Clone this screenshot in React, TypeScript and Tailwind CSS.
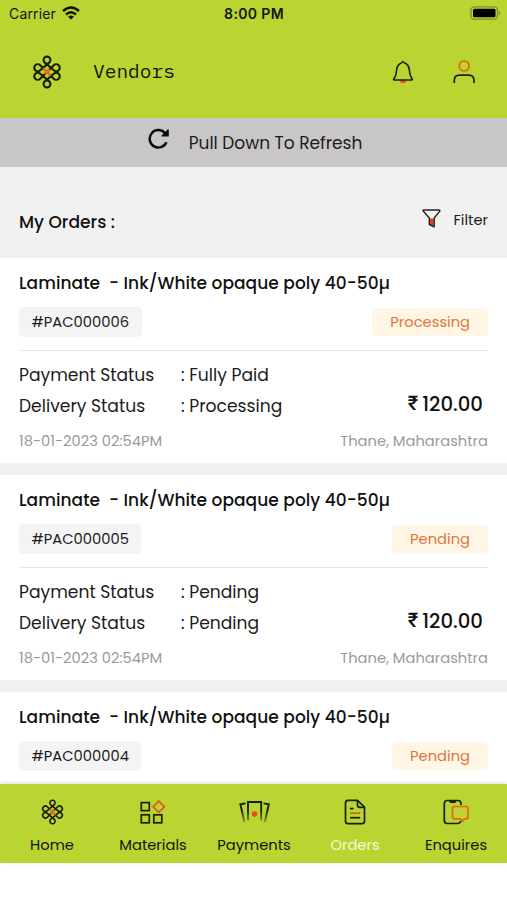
import { FC, ReactNode } from "react"

interface Order {
    id: string
    status: string
    payment?: string
    delivery?: string
}

const orders: Order[] = [
    { id: "#PAC000006", status: "Processing", payment: "Fully Paid", delivery: "Processing" },
    { id: "#PAC000005", status: "Pending", payment: "Pending", delivery: "Pending" },
    { id: "#PAC000004", status: "Pending" },
]

const Knot: FC<{ className: string }> = ({ className }) => (
    <svg className={className} viewBox="0 0 28 34" fill="none" stroke="#17200a" strokeWidth="2.1" strokeLinecap="round">
        <path d="M11.6 7.4 A3.4 3.4 0 1 1 16.4 7.4 L7.2 15.2 A3.5 3.5 0 1 1 7.2 10.2 L20.8 23.8 A3.5 3.5 0 1 0 20.8 18.8 L11.6 26.6 A3.4 3.4 0 1 0 16.4 26.6 L7.2 18.8 A3.5 3.5 0 1 0 7.2 23.8 L20.8 10.2 A3.5 3.5 0 1 1 20.8 15.2z" />
        <path d="M10.8 13.8 L17.2 20.2 M16 15 L12.4 18.6" stroke="#f0701d" />
    </svg>
)

const Bell = () => (
    <svg className="w-[22px] h-6" viewBox="0 0 22 24" fill="none">
        <path d="M7.8 20.3 a3.2 3 0 0 0 6.4 0z" fill="#e8541b" />
        <path d="M11 1.5 C10.4 2.6 9.4 2.9 8 3.7 C5.8 5 4.8 7.2 4.6 10 C4.4 14.5 3.5 16.8 1.7 19 Q1.2 20 2.2 20 H19.8 Q20.8 20 20.3 19 C18.5 16.8 17.6 14.5 17.4 10 C17.2 7.2 16.2 5 14 3.7 C12.6 2.9 11.6 2.6 11 1.5z" stroke="#17200a" strokeWidth="1.5" strokeLinejoin="round" />
    </svg>
)

const User = () => (
    <svg className="w-6 h-6" viewBox="0 0 24 24" fill="none" strokeWidth="1.7">
        <circle cx="12.2" cy="6" r="5" stroke="#e8641b" />
        <path d="M2.3 23 V20.5 Q2.3 15.2 7.6 15.2 H16.6 Q22 15.2 22 20.5 V23" stroke="#17200a" />
    </svg>
)

const Materials = () => (
    <svg className="w-[26px] h-6" viewBox="0 0 26 24" fill="none" stroke="#17200a" strokeWidth="1.7">
        <rect x="1.3" y="2.6" width="8" height="8" />
        <rect x="1.3" y="14.8" width="8" height="8" />
        <rect x="13.8" y="14.8" width="8" height="8" />
        <path d="M18.8 1.2 L24.4 6.8 L18.8 12.4 L13.2 6.8z" stroke="#e8541b" />
    </svg>
)

const Payments = () => (
    <svg className="w-[31px] h-6" viewBox="0 0 31 24" fill="none">
        <defs>
            <linearGradient id="fade" gradientUnits="userSpaceOnUse" x1="0" y1="2" x2="0" y2="23">
                <stop offset="0.4" stopColor="#17200a" />
                <stop offset="1" stopColor="#17200a" stopOpacity="0.25" />
            </linearGradient>
        </defs>
        <g stroke="url(#fade)" strokeWidth="1.9">
            <path d="M9 20.5 V2 H22.2 V20.5" />
            <path d="M6.6 3.4 L1.4 4.3 L5.4 22 M24.6 3.4 L29.8 4.3 L25.8 22" />
        </g>
        <circle cx="15.6" cy="14" r="2.8" fill="#f04a20" />
    </svg>
)

const Orders = () => (
    <svg className="w-[22px] h-[26px]" viewBox="0 0 22 26" fill="none" stroke="#17200a" strokeWidth="1.7" strokeLinejoin="round">
        <path d="M13.5 1.3 H4 Q1.5 1.3 1.5 4 V22 Q1.5 24.7 4 24.7 H18 Q20.5 24.7 20.5 22 V8.2z" />
        <path d="M13.5 1.5 V6 Q13.5 8.3 15.7 8.3 H20.3 M6 9.7 H9.5" />
        <path d="M6 14.2 H16.2" stroke="#c6651a" />
        <path d="M6 18.7 H16.2" />
    </svg>
)

const Enquires = () => (
    <svg className="w-[26px] h-[26px]" viewBox="0 0 26 26" fill="none" strokeWidth="1.7" strokeLinejoin="round">
        <path d="M18 6 V4.5 Q18 1.5 15 1.5 H4.3 Q1.3 1.5 1.3 4.5 V21.5 Q1.3 24.5 4.3 24.5 H14.5 Q17 24.5 18 22" stroke="#17200a" />
        <path d="M5.8 1.5 Q6.2 4 8 4 H11.3 Q13.2 4 13.5 1.5z" fill="#17200a" />
        <path d="M11.5 7.5 H23 Q25 7.5 25 9.5 V17.8 Q25 19.8 23 19.8 H21.5 L19.5 22.2 L17.3 19.8 H11.5 Q9.5 19.8 9.5 17.8 V9.5 Q9.5 7.5 11.5 7.5z" stroke="#e8641b" />
    </svg>
)

const StatusBar = () => (
    <div className="grid grid-cols-3 items-center h-7 pl-[9px] pr-[6px] text-[14px] font-['Inter',sans-serif]">
        <div className="flex items-center gap-[6px]">
            <span className="w-[47px] -mt-px tracking-[0.15px]">Carrier</span>
            <svg className="w-[18px] h-[14px] -mt-[3px]" viewBox="0 0 18 14" fill="none" stroke="#0b1002" strokeWidth="2.4">
                <path d="M1 5 Q9 -1.9 17 5" />
                <path d="M4 8.5 Q9 4.1 14 8.5" />
                <path d="M9 13.6 L6.1 10.7 Q9 8.5 11.9 10.7z" fill="#0b1002" stroke="none" />
            </svg>
        </div>
        <div className="text-center font-semibold tracking-[0.35px] -ml-[2px] -mt-[2px]">8:00 PM</div>
        <svg className="w-[31px] h-[14px] -mt-[2px] justify-self-end" viewBox="0 0 31 14">
            <rect x="1" y="0.8" width="26.5" height="12.4" rx="3.5" fill="none" stroke="#7c8d2d" strokeWidth="1.3" />
            <rect x="3" y="2.8" width="22.5" height="8.4" rx="1.5" fill="#000" />
            <path d="M28.8 4.8 Q31.5 7 28.8 9.2z" fill="#7c8d2d" />
        </svg>
    </div>
)

const OrderCard: FC<{ order: Order }> = ({ order }) => (
    <div className="bg-white h-[205px] shrink-0 px-[19px] pt-[13px]">
        <div className="h-6 leading-6 text-[17px] font-medium tracking-[0.06px] whitespace-pre text-[#111]">
            {"Laminate  - Ink/White opaque poly 40-50µ"}
        </div>
        <div className="flex justify-between items-center mt-3 h-[30px] text-[14.7px]">
            <div className="flex items-center h-[30px] px-[12.5px] rounded bg-[#f4f4f4]">{order.id}</div>
            <div className="flex items-center h-7 px-[18px] rounded bg-[#fff6e6] text-[#df7538]">{order.status}</div>
        </div>
        <div className="mt-[13px] border-t border-[#e5e5e5]" />
        {order.payment && (
            <>
                <div className="pt-[9px] flex justify-between">
                    <div className="grid grid-cols-[162px_auto] auto-rows-[31px] items-center text-[17.15px] whitespace-nowrap">
                        <span>Payment Status</span>
                        <span>: {order.payment}</span>
                        <span>Delivery Status</span>
                        <span>: {order.delivery}</span>
                    </div>
                    <div className="flex items-center gap-1 self-end h-[34px] mr-[5px] font-medium text-[19.7px] text-[#111]">
                        <span className="text-[20px] -mt-1 font-['Roboto',sans-serif]">₹</span>
                        <span>120.00</span>
                    </div>
                </div>
                <div className="flex justify-between mt-2 leading-[22px] text-[14.7px] text-[#9a9a9a]">
                    <span>18-01-2023 02:54PM</span>
                    <span>Thane, Maharashtra</span>
                </div>
            </>
        )}
    </div>
)

const Tab: FC<{ label: string; active?: boolean; children: ReactNode }> = ({ label, active, children }) => (
    <div className="flex flex-col items-center w-[101px] text-[14.7px]">
        <div className="flex items-center justify-center h-7 mt-[14px]">{children}</div>
        <span className={active ? "mt-[9px] leading-5 text-[#f4f9d8]" : "mt-[9px] leading-5"}>{label}</span>
    </div>
)

const App = () => {
    return (
        <div className="w-[507px] h-[900px] flex flex-col overflow-hidden bg-white text-[#1c1c1c] font-['Poppins','Inter',sans-serif]">
            <header className="h-[118px] shrink-0 bg-[#bad432] text-[#10160a]">
                <StatusBar />
                <div className="flex items-center h-[88px] pl-[33px] pr-[31px]">
                    <Knot className="w-7 h-[34px]" />
                    <span className="ml-8 -mt-[2px] font-['IBM_Plex_Mono','Liberation_Mono',monospace] text-[19.5px]">Vendors</span>
                    <div className="ml-auto flex items-center gap-[38px]">
                        <Bell />
                        <User />
                    </div>
                </div>
            </header>

            <div className="h-[49px] shrink-0 flex items-center justify-center pl-[3px] gap-[19px] bg-[#c8c6c7] text-[17px]">
                <svg className="w-[22px] h-[22px] -mt-[7px]" viewBox="0 0 22 22" fill="none" stroke="#0c0c0c" strokeWidth="2.5">
                    <path d="M17.2 5.4 A8.7 8.7 0 1 0 18.4 14.2" />
                    <path d="M20.8 1.6 V8.6 H13.6 V7.4 L19.6 1.6z" fill="#0c0c0c" stroke="none" />
                </svg>
                <span className="mt-[2px]">Pull Down To Refresh</span>
            </div>

            <div className="h-[91px] shrink-0 flex items-center justify-between px-[19px] pt-5 bg-[#f1f1f1]">
                <span className="text-[17.1px] font-medium text-[#111]">My Orders :</span>
                <div className="flex items-center gap-3 -mt-1 text-[14.7px]">
                    <svg className="w-[19px] h-[19px] -mt-1" viewBox="0 0 19 19" fill="none">
                        <path d="M7.2 9.5 H11.8 V17.5 L7.2 15.5z" fill="#e83a25" />
                        <path d="M1 1.7 Q1 1 2 1 H17 Q18 1 18 1.9 L12.2 9 V17.8 L7.3 15.5 V9z" stroke="#222" strokeWidth="1.4" strokeLinejoin="round" />
                    </svg>
                    <span>Filter</span>
                </div>
            </div>

            <main className="h-[526px] shrink-0 flex flex-col gap-3 overflow-hidden bg-[#f1f1f1]">
                {orders.map((order) => (
                    <OrderCard key={order.id} order={order} />
                ))}
            </main>

            <nav className="h-[79px] shrink-0 flex justify-between pl-[1.5px] pr-[0.5px] bg-[#bad432] text-[#10160a] shadow-[0_-1px_4px_rgba(0,0,0,0.15)]">
                <Tab label="Home"><Knot className="w-[23px] h-[26px]" /></Tab>
                <Tab label="Materials"><Materials /></Tab>
                <Tab label="Payments"><Payments /></Tab>
                <Tab label="Orders" active><Orders /></Tab>
                <Tab label="Enquires"><Enquires /></Tab>
            </nav>
        </div>
    )
}

export default App
